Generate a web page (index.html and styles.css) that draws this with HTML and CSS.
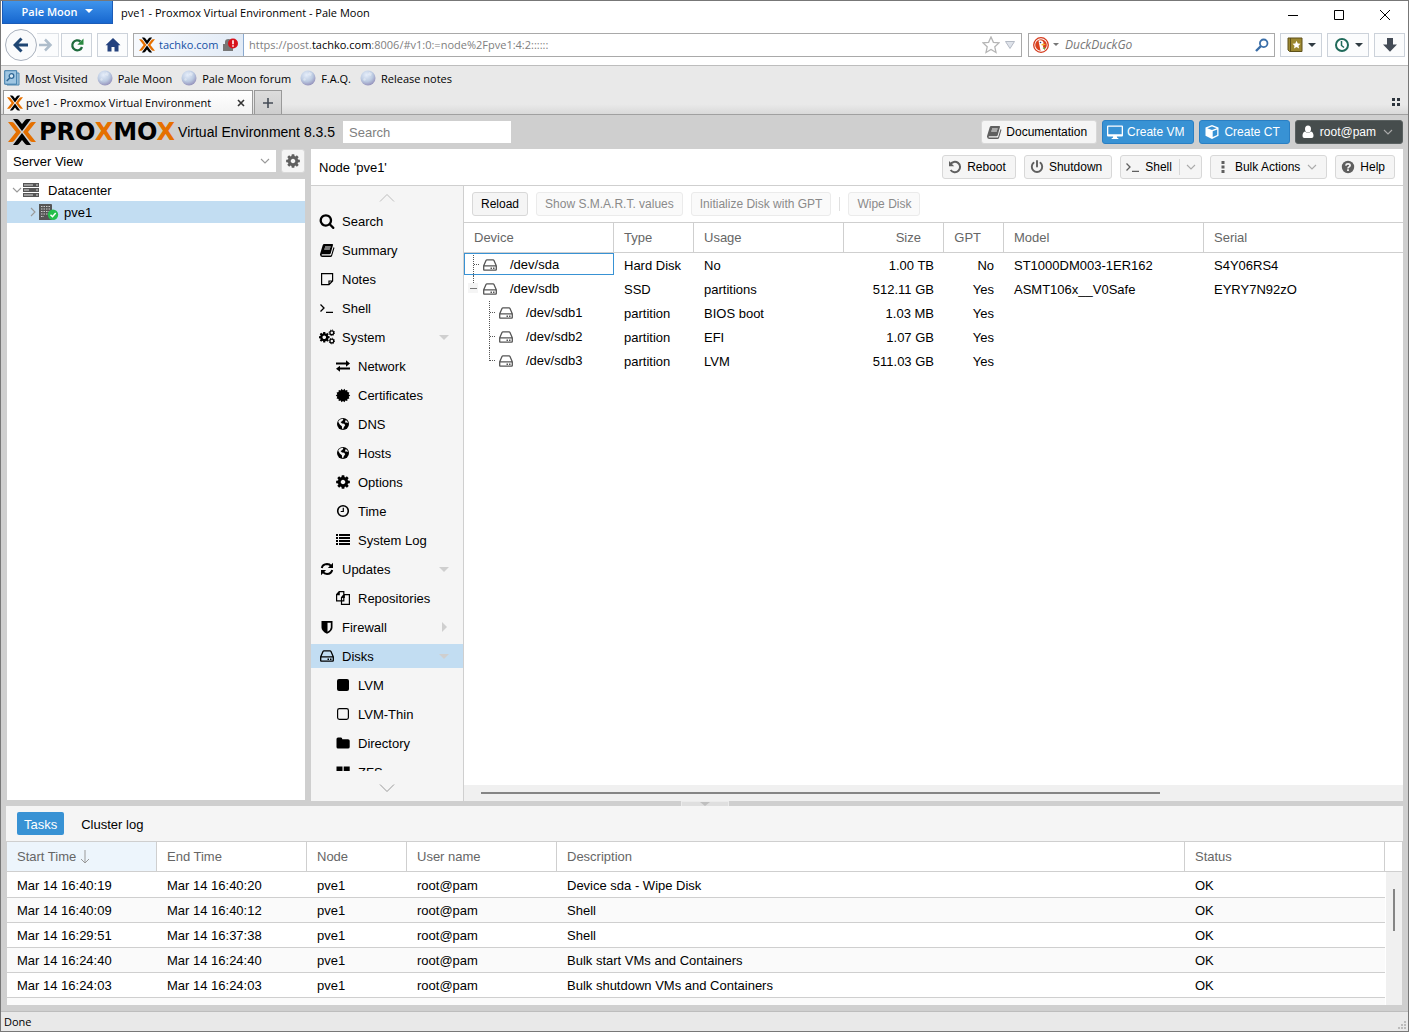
FILE: index.html
```html
<!DOCTYPE html>
<html lang="en">
<head>
    <meta charset="UTF-8">
    <meta name="viewport" content="width=device-width, initial-scale=1.0">
    <title>pve1 - Proxmox Virtual Environment</title>
    <link rel="stylesheet" href="styles.css">
</head>
<body>

    <!-- Icon set -->
    <svg class="sprite" aria-hidden="true">
        <defs>
            <radialGradient id="moon" cx="40%" cy="30%" r="70%">
                <stop offset="0" stop-color="#e6eefa"/>
                <stop offset="0.6" stop-color="#bccbe2"/>
                <stop offset="1" stop-color="#9795bd"/>
            </radialGradient>
        </defs>
        <symbol id="i-px" viewBox="0 0 28 26">
            <path fill="#e57000" d="M0 3h3.500q1.700 0 2.700 1.200L13 13l-6.800 8.800Q5.200 23 3.500 23H0l8-10zM28 3h-3.500q-1.700 0-2.700 1.200L15 13l6.800 8.800q1 1.200 2.700 1.200H28l-8-10z"/>
            <path fill="#000" d="M5 0h3.500q1.500 0 2.500 1.200L14 5l3-3.800Q18 0 19.500 0H23l-9 12zM5 26h3.500q1.500 0 2.500-1.200l3-3.800 3 3.800q1 1.200 2.500 1.200H23l-9-12z"/>
        </symbol>
        <symbol id="i-moon" viewBox="0 0 16 16">
            <circle cx="8" cy="8" r="7.500" fill="url(#moon)"/>
            <path d="M9 2l3 1-1 3-3-1zM4 8l2 1-1 2-2-1z" fill="#fff" opacity=".35"/>
        </symbol>
        <symbol id="i-search" viewBox="0 0 1792 1792"><path d="M1216 832q0-185-131.500-316.500t-316.500-131.500-316.500 131.500-131.500 316.500 131.500 316.500 316.500 131.500 316.500-131.500 131.500-316.500zm512 832q0 52-38 90t-90 38q-54 0-90-38l-343-342q-179 124-399 124-143 0-273.500-55.500t-225-150-150-225-55.500-273.500 55.500-273.500 150-225 225-150 273.500-55.500 273.500 55.500 225 150 150 225 55.500 273.500q0 220-124 399l343 343q37 37 37 90z"/></symbol>
        <symbol id="i-cog" viewBox="0 0 1792 1792"><path d="M1152 896q0-106-75-181t-181-75-181 75-75 181 75 181 181 75 181-75 75-181zm512-109v222q0 12-8 23t-20 13l-185 28q-19 54-39 91 35 50 107 138 10 12 10 25t-9 23q-27 37-99 108t-94 71q-12 0-26-9l-138-108q-44 23-91 38-16 136-29 186-7 28-36 28h-222q-14 0-24.500-8.500t-11.500-21.500l-28-184q-49-16-90-37l-141 107q-10 9-25 9-14 0-25-11-126-114-165-168-7-10-7-23 0-12 8-23 15-21 51-66.500t54-70.500q-27-50-41-99l-183-27q-13-2-21-12.500t-8-23.500v-222q0-12 8-23t19-13l186-28q14-46 39-92-40-57-107-138-10-12-10-24 0-10 9-23 26-36 98.500-107.500t94.500-71.500q13 0 26 10l138 107q44-23 91-38 16-136 29-186 7-28 36-28h222q14 0 24.500 8.500t11.500 21.500l28 184q49 16 90 37l142-107q9-9 24-9 13 0 25 10 129 119 165 170 7 8 7 22 0 12-8 23-15 21-51 66.500t-54 70.500q26 50 41 98l183 28q13 2 21 12.500t8 23.500z"/></symbol>
        <symbol id="i-book" viewBox="0 0 16 16">
            <path fill-rule="evenodd" d="M5.200 2h8q1.100 0 .8 1.100l-2.300 8.200q-.3.900-1.200.9H3.300q-.8 0-.7.800.1.600 1 .6h7.700q.7 0 .9-.6l2.300-7.800.7.300q.3.300.1.900l-2.200 7.400q-.4 1.200-1.600 1.200H3.400Q1.300 15 1 12.800q-.1-.6.200-1.300L3.700 3.200Q4.100 2 5.200 2zM6.100 4.400l-.3 1h5.700l.3-1zM5.400 6.600l-.3 1h5.700l.3-1z"/>
        </symbol>
        <symbol id="i-note" viewBox="0 0 16 16"><path fill="none" stroke="currentColor" stroke-width="1.200" d="M2.600 2.600h11v7.400l-3.600 3.600H2.600zM13.600 10H10v3.600"/></symbol>
        <symbol id="i-term" viewBox="0 0 16 16"><path fill="none" stroke="currentColor" stroke-width="1.300" d="M1.500 4.500l3.500 3.500-3.500 3.500M7 12.300h7"/></symbol>
        <symbol id="i-cogs" viewBox="0 0 16 16">
            <use href="#i-cog" x="-1" y="2" width="12.500" height="12.500"/>
            <circle cx="12.800" cy="3.800" r="1.900" fill="none" stroke="currentColor" stroke-width="1.300"/>
            <circle cx="12.800" cy="3.800" r="2.800" fill="none" stroke="currentColor" stroke-width="1" stroke-dasharray="1.100 1.100"/>
            <circle cx="12.800" cy="12" r="1.900" fill="none" stroke="currentColor" stroke-width="1.300"/>
            <circle cx="12.800" cy="12" r="2.800" fill="none" stroke="currentColor" stroke-width="1" stroke-dasharray="1.100 1.100"/>
        </symbol>
        <symbol id="i-exchange" viewBox="0 0 16 16"><path d="M1 4.500h10V2.300l4 3.200-4 3.200V6.500H1zM15 9.500H5V7.800L1 10.800l4 3v-2.300h10z"/></symbol>
        <symbol id="i-cert" viewBox="0 0 16 16"><path d="M8 3.200l1.500-1.400.8 1.800 2-.6.100 2.100 2 .3-.7 1.900L15.200 8.500l-1.500 1.200.7 1.900-2 .3-.1 2.100-2-.6-.8 1.800L8 13.900l-1.500 1.300-.8-1.800-2 .6-.1-2.100-2-.3.700-1.900L.8 8.500l1.500-1.200-.7-1.900 2-.3.100-2.100 2 .6.800-1.800z"/></symbol>
        <symbol id="i-globe" viewBox="0 0 16 16">
            <circle cx="8" cy="8" r="6"/>
            <path fill="#f5f5f5" d="M5 3.500l2.800-.8.500 1L7 5.200 5.500 6 7 7.500l2.200.3 1 1.500-1.400 2-.8 2.200-1-1.300-.1-2L5 8.800 3.600 6.500 3.200 5.500zM10.800 4l1.500 1.200.9 1.800-1.500-.4-1.200.2-.4-1.200z"/>
        </symbol>
        <symbol id="i-clock" viewBox="0 0 16 16"><circle cx="8" cy="8" r="5.300" fill="none" stroke="currentColor" stroke-width="1.600"/><path fill="none" stroke="currentColor" stroke-width="1.200" d="M8.300 4.800v3.700H5.700"/></symbol>
        <symbol id="i-list" viewBox="0 0 16 16"><path d="M1 2h2v2H1zM4 2h11v2H4zM1 5h2v2H1zM4 5h11v2H4zM1 8h2v2H1zM4 8h11v2H4zM1 11h2v2H1zM4 11h11v2H4z"/></symbol>
        <symbol id="i-refresh" viewBox="0 0 16 16"><path fill="none" stroke="currentColor" stroke-width="2" d="M2.800 7Q3.600 3.200 8 3q2.600 0 4.300 2.100M13.200 9q-.8 3.800-5.200 4-2.600 0-4.300-2.100"/><path d="M14 1.800V7H8.900zM2 14.200V9h5.100z"/></symbol>
        <symbol id="i-copy" viewBox="0 0 16 16"><path fill="#f5f5f5" stroke="currentColor" stroke-width="1.200" d="M4.200 1.700h4.600v9.100H1.600V4.600zM4.200 1.700v2.900H1.600M9 4.700h5.400v9.600H6.500V7.500zM9.300 4.700v2.800H6.500"/></symbol>
        <symbol id="i-shield" viewBox="0 0 16 16"><path fill-rule="evenodd" d="M2.500 2h11v6.500q0 3.600-5.500 6.300-5.500-2.700-5.500-6.300zM8.500 3.700v9q3.300-1.900 3.300-4.200V3.700z"/></symbol>
        <symbol id="i-hdd" viewBox="0 0 16 16"><path fill="none" stroke="currentColor" stroke-width="1.300" d="M1.700 8.800L4 3.500q.3-.6 1-.6h6q.7 0 1 .6l2.300 5.300v3.700q0 .7-.7.700H2.400q-.7 0-.7-.7zM1.700 8.800h12.600"/><path d="M8.500 10.500H10V12H8.500zM11 10.500h1.500V12H11z"/></symbol>
        <symbol id="i-square" viewBox="0 0 16 16"><rect x="2" y="2" width="12" height="12" rx="2"/></symbol>
        <symbol id="i-square-o" viewBox="0 0 16 16"><rect x="2.600" y="2.600" width="10.800" height="10.800" rx="1.800" fill="none" stroke="currentColor" stroke-width="1.200"/></symbol>
        <symbol id="i-folder" viewBox="0 0 16 16"><path d="M1.500 4q0-1.500 1.500-1.500h3q1.200 0 1.300 1.700H13q1.700 0 1.700 1.500V12q0 1.500-1.700 1.500H3q-1.500 0-1.500-1.500z"/></symbol>
        <symbol id="i-large" viewBox="0 0 16 16"><path d="M1.500 2.500h6v5h-6zM8.700 2.500h6v5h-6zM1.500 8.700h6v5h-6zM8.700 8.700h6v5h-6z"/></symbol>
        <symbol id="i-undo" viewBox="0 0 16 16"><path fill="none" stroke="currentColor" stroke-width="2" d="M3.300 5.500A5.200 5.200 0 1 1 3.600 11"/><path d="M2 2v5.300h5.200z"/></symbol>
        <symbol id="i-power" viewBox="0 0 16 16"><path fill="none" stroke="currentColor" stroke-width="1.900" stroke-linecap="round" d="M4.600 3.800a5.200 5.200 0 1 0 6.800 0M8 2v5.500"/></symbol>
        <symbol id="i-dots" viewBox="0 0 16 16"><path d="M6.500 2h3v3h-3zM6.500 6.500h3v3h-3zM6.500 11h3v3h-3z"/></symbol>
        <symbol id="i-help" viewBox="0 0 16 16"><circle cx="8" cy="8" r="6.200"/><path fill="none" stroke="#f5f5f5" stroke-width="1.700" d="M5.800 6.600Q6 4.900 8 4.900q2 0 2.100 1.500Q10 7.400 8.900 7.900 8 8.300 8 9.400"/><path fill="#f5f5f5" d="M7.100 10.300h1.800v1.700H7.100z"/></symbol>
        <symbol id="i-desktop" viewBox="0 0 16 16"><path fill-rule="evenodd" d="M0 2.500Q0 1.500 1 1.500h14q1 0 1 1v9q0 1-1 1H9.800l.5 1.500h1v1H4.700v-1h1l.5-1.500H1q-1 0-1-1zM1.300 2.800v7.500h13.400V2.800z"/></symbol>
        <symbol id="i-cube" viewBox="0 0 16 16"><path fill-rule="evenodd" d="M8 1l6.500 2.400v8.400L8 15l-6.500-3.200V3.400zM8 2.500L3.300 4.200 8 6l4.700-1.800zM8.700 7.200v5.900l4.500-2.200V5.500z"/></symbol>
        <symbol id="i-user" viewBox="0 0 16 16"><ellipse cx="8" cy="5" rx="3" ry="3.500"/><path d="M5 7.500q3 2.600 6 0 2.500.8 2.500 4.500 0 2-1.800 2H4.300q-1.800 0-1.800-2 0-3.700 2.500-4.500z"/></symbol>
        <symbol id="i-chev" viewBox="0 0 10 10"><path fill="none" stroke="currentColor" stroke-width="1.100" d="M1 3l4 4 4-4"/></symbol>
        <symbol id="i-chev-r" viewBox="0 0 10 10"><path fill="none" stroke="currentColor" stroke-width="1.100" d="M3 1l4 4-4 4"/></symbol>
        <symbol id="i-server" viewBox="0 0 16 14"><path d="M0 0h16v4H0zM0 5h16v4H0zM0 10h16v4H0z"/><path fill="#ddd" d="M1 1.500h9v1H1zM1 6.500h5v1H1zM1 11.500h9v1H1zM13 1.500h2v1h-2zM13 6.500h2v1h-2zM13 11.500h2v1h-2z"/></symbol>
        <symbol id="i-node" viewBox="0 0 20 16">
            <path fill="#555" d="M0 0h12q1 0 1 1v15H0z"/>
            <path fill="none" stroke="#ccc" stroke-width="1.200" stroke-dasharray="1.500 1" d="M2 2.500h9M2 5h9M2 7.500h9M2 10h9M2 12.500h3"/>
            <circle cx="14" cy="10.700" r="5.200" fill="#21bf4b"/>
            <path fill="none" stroke="#fff" stroke-width="1.500" d="M11.500 10.700l2 2 3.200-3.700"/>
        </symbol>
        <symbol id="i-elbow" viewBox="0 0 16 24"><path class="dots" d="M8.500 1v23M9 12.500h5"/></symbol>
        <symbol id="i-elbow-end" viewBox="0 0 16 24"><path class="dots" d="M8.500 0v13M9 12.500h5"/></symbol>
        <symbol id="i-minus" viewBox="0 0 16 24"><path class="dots" d="M8.500 0v7"/><path fill="#f5f5f5" d="M3 7h10v10H3z"/><path fill="#777" d="M5 12h7v1H5z"/></symbol>
    </svg>

    <div class="window">
        <header class="chrome">
            <div class="titlebar">
                <button class="app-menu">Pale Moon <span class="caret"></span></button>
                <span class="window-title">pve1 - Proxmox Virtual Environment - Pale Moon</span>
                <button class="win-btn" aria-label="Minimize"><svg viewBox="0 0 12 12"><path d="M1 6.500h10"/></svg></button>
                <button class="win-btn" aria-label="Maximize"><svg viewBox="0 0 12 12"><path d="M1.500 1.500h9v9h-9z"/></svg></button>
                <button class="win-btn" aria-label="Close"><svg viewBox="0 0 12 12"><path d="M1 1l10 10M11 1L1 11"/></svg></button>
            </div>

            <div class="navbar">
                <div class="history">
                    <button class="back" aria-label="Back"><svg viewBox="0 0 16 16"><path d="M8.500 1.500L2 8l6.500 6.500M2.500 8H15" fill="none" stroke="#1f4673" stroke-width="3"/></svg></button>
                    <button class="forward" aria-label="Forward"><svg viewBox="0 0 16 16"><path d="M8 2.500L13.500 8 8 13.500M13 8H2" fill="none" stroke="#aebdcb" stroke-width="2.500"/></svg></button>
                </div>
                <button class="tool" aria-label="Reload"><svg viewBox="0 0 16 16"><path d="M11.500 4.500A5 5 0 1 0 13 10" fill="none" stroke="#1f6b3d" stroke-width="2.300"/><path d="M14.500 1.500v6.200H8.300z" fill="#2b8a40"/></svg></button>
                <button class="tool" aria-label="Home"><svg viewBox="0 0 16 16"><path d="M8 1l7.500 7.300h-2V14.500H9.500V10h-3v4.500h-4V8.300h-2z" fill="#24427f"/></svg></button>
                <div class="urlbar">
                    <button class="identity">
                        <svg class="fav"><use href="#i-px"/></svg>
                        tachko.com
                        <svg class="fav" viewBox="0 0 16 16"><path d="M1 7h2V5q0-3 3.500-3T10 5v2h1v7H1z" fill="#777"/><circle cx="11" cy="6.500" r="5" fill="#d8121c"/><path d="M10.200 3.300h1.600v4h-1.600zM10.200 8.200h1.600v1.500h-1.600z" fill="#fff"/></svg>
                    </button>
                    <div class="url" role="textbox" aria-label="Address">https://post.<b>tachko.com</b>:8006/#v1:0:=node%2Fpve1:4:2::::::</div>
                    <button class="bare" aria-label="Bookmark this page"><svg class="star" viewBox="0 0 18 18"><path d="M9 1l2.400 5.300 5.600.6-4.200 3.900 1.200 5.700-5-3-5 3 1.200-5.700L1 6.900l5.600-.6z" fill="#fff" stroke="#b5b5b5" stroke-width="1.300"/></svg></button>
                    <button class="bare" aria-label="Show history"><svg class="drop" viewBox="0 0 10 8"><path d="M.5.5h9L5 7.500z" fill="#dfe3ea" stroke="#b4bac4"/></svg></button>
                </div>
                <div class="searchbar">
                    <svg class="fav" viewBox="0 0 16 16"><circle cx="8" cy="8" r="7.300" fill="#fff" stroke="#d53a1c" stroke-width="1.300"/><circle cx="8" cy="8" r="5.800" fill="#d9411e"/><path d="M5.500 3.500q4-1 5 2l-.5 4 1.500 4Q9 14.500 7.500 13.500z" fill="#fff"/><path d="M8.500 7q3-.6 4.500.3-2 1.500-4.500 1z" fill="#f5b62a"/><path d="M9.500 11l2.500-.8v2.600z" fill="#5cae3c"/><circle cx="7.500" cy="5.500" r=".8" fill="#24427f"/></svg>
                    <span class="caret dark"></span>
                    <input type="text" placeholder="DuckDuckGo" aria-label="Web search">
                    <button class="bare" aria-label="Go"><svg class="glass" viewBox="0 0 14 14"><circle cx="8.700" cy="5.300" r="3.800" fill="none" stroke="#3a6ea8" stroke-width="1.800"/><path d="M6 8l-5 5" stroke="#3a6ea8" stroke-width="2.400"/></svg></button>
                </div>
                <button class="tool wide" aria-label="Bookmarks"><svg viewBox="0 0 16 16"><path d="M1 1h14v13.500H2.500L1 13z" fill="#9b8730" stroke="#5e511b"/><path d="M3.500 1v13" stroke="#5e511b"/><path d="M9.500 3.800l1.300 2.600 2.800.3-2.100 2 .6 2.800-2.600-1.400-2.500 1.400.5-2.800-2-2 2.800-.3z" fill="#fff"/></svg><span class="caret dark"></span></button>
                <button class="tool wide" aria-label="History"><svg viewBox="0 0 16 16"><circle cx="8" cy="8" r="6" fill="#fff" stroke="#1f6a5a" stroke-width="2"/><path d="M7.500 4v4.500l2.500 2" fill="none" stroke="#1f6a5a" stroke-width="1.500"/></svg><span class="caret dark"></span></button>
                <button class="tool" aria-label="Downloads"><svg viewBox="0 0 16 16"><path d="M5 1h6v6.500h4L8 14.800 1 7.500h4z" fill="#434b56"/></svg></button>
            </div>

            <nav class="bookmarks">
                <a href="#"><svg class="fav" viewBox="0 0 16 16"><path d="M3 3h12v12H3z" fill="#a9cbe2" stroke="#4f87b0"/><path d="M.7.700h12v13.500H.7z" fill="#9fc6e2" stroke="#3c7aa8"/><circle cx="7.500" cy="6" r="2.300" fill="#d7e9f5" stroke="#2f6795" stroke-width="1.300"/><path d="M5.700 8l-3 3" stroke="#2f6795" stroke-width="1.500"/></svg>Most Visited</a>
                <a href="#"><svg class="fav"><use href="#i-moon"/></svg>Pale Moon</a>
                <a href="#"><svg class="fav"><use href="#i-moon"/></svg>Pale Moon forum</a>
                <a href="#"><svg class="fav"><use href="#i-moon"/></svg>F.A.Q.</a>
                <a href="#"><svg class="fav"><use href="#i-moon"/></svg>Release notes</a>
            </nav>

            <div class="tabs">
                <div class="tab">
                    <svg class="fav"><use href="#i-px"/></svg>
                    <span>pve1 - Proxmox Virtual Environment</span>
                    <button class="bare" aria-label="Close tab"><svg class="tab-x" viewBox="0 0 8 8"><path d="M1 1l6 6M7 1L1 7" stroke="#333" stroke-width="1.600"/></svg></button>
                </div>
                <button class="new-tab" aria-label="New tab"><svg viewBox="0 0 10 10"><path d="M5 0v10M0 5h10" stroke="#444b55" stroke-width="1.600"/></svg></button>
                <button class="bare groups" aria-label="Tab groups"><svg class="tab-x" viewBox="0 0 8 8"><path d="M0 0h3v3H0zM5 0h3v3H5zM0 5h3v3H0zM5 5h3v3H5z" fill="#2d353d"/></svg></button>
            </div>
        </header>

        <main class="pve">
            <div class="pve-top">
                <svg class="emblem"><use href="#i-px"/></svg>
                <span class="wordmark">PRO<i>X</i>MO<i>X</i></span>
                <span class="version">Virtual Environment 8.3.5</span>
                <input class="pve-search" type="text" placeholder="Search" aria-label="Search">
                <div class="top-buttons">
                    <button class="btn"><svg class="ico"><use href="#i-book"/></svg>Documentation</button>
                    <button class="btn blue"><svg class="ico"><use href="#i-desktop"/></svg>Create VM</button>
                    <button class="btn blue"><svg class="ico"><use href="#i-cube"/></svg>Create CT</button>
                    <button class="btn dark"><svg class="ico"><use href="#i-user"/></svg>root@pam<svg class="chev"><use href="#i-chev"/></svg></button>
                </div>
            </div>

            <div class="workspace">
                <aside class="resources">
                    <div class="view-row">
                        <div class="view-select">
                            <select aria-label="View"><option>Server View</option></select>
                            <svg class="chev"><use href="#i-chev"/></svg>
                        </div>
                        <button class="btn gear" aria-label="Tree settings"><svg class="ico"><use href="#i-cog"/></svg></button>
                    </div>
                    <div class="tree">
                        <a href="#"><svg class="chev"><use href="#i-chev"/></svg><svg class="node-ico"><use href="#i-server" width="16" height="14" y="1"/></svg>Datacenter</a>
                        <a href="#" class="child selected"><svg class="chev"><use href="#i-chev-r"/></svg><svg class="node-ico"><use href="#i-node"/></svg>pve1</a>
                    </div>
                </aside>

                <section class="content">
                    <div class="content-head">
                        <h1>Node 'pve1'</h1>
                        <button class="btn"><svg class="ico"><use href="#i-undo"/></svg>Reboot</button>
                        <button class="btn"><svg class="ico"><use href="#i-power"/></svg>Shutdown</button>
                        <button class="btn split"><svg class="ico"><use href="#i-term"/></svg>Shell<svg class="chev"><use href="#i-chev"/></svg></button>
                        <button class="btn"><svg class="ico"><use href="#i-dots"/></svg>Bulk Actions<svg class="chev"><use href="#i-chev"/></svg></button>
                        <button class="btn"><svg class="ico"><use href="#i-help"/></svg>Help</button>
                    </div>

                    <div class="content-body">
                        <nav class="menu">
                            <button class="scroller faded" aria-label="Scroll up"><svg viewBox="0 0 16 9"><path d="M1 8.500l7-7 7 7"/></svg></button>
                            <div class="menu-items">
                                <a href="#"><svg class="ico"><use href="#i-search"/></svg>Search</a>
                                <a href="#"><svg class="ico"><use href="#i-book"/></svg>Summary</a>
                                <a href="#"><svg class="ico"><use href="#i-note"/></svg>Notes</a>
                                <a href="#"><svg class="ico"><use href="#i-term"/></svg>Shell</a>
                                <a href="#" class="open"><svg class="ico"><use href="#i-cogs"/></svg>System</a>
                                <a href="#" class="sub"><svg class="ico"><use href="#i-exchange"/></svg>Network</a>
                                <a href="#" class="sub"><svg class="ico"><use href="#i-cert"/></svg>Certificates</a>
                                <a href="#" class="sub"><svg class="ico"><use href="#i-globe"/></svg>DNS</a>
                                <a href="#" class="sub"><svg class="ico"><use href="#i-globe"/></svg>Hosts</a>
                                <a href="#" class="sub"><svg class="ico"><use href="#i-cog"/></svg>Options</a>
                                <a href="#" class="sub"><svg class="ico"><use href="#i-clock"/></svg>Time</a>
                                <a href="#" class="sub"><svg class="ico"><use href="#i-list"/></svg>System Log</a>
                                <a href="#" class="open"><svg class="ico"><use href="#i-refresh"/></svg>Updates</a>
                                <a href="#" class="sub"><svg class="ico"><use href="#i-copy"/></svg>Repositories</a>
                                <a href="#" class="closed"><svg class="ico"><use href="#i-shield"/></svg>Firewall</a>
                                <a href="#" class="open selected"><svg class="ico"><use href="#i-hdd"/></svg>Disks</a>
                                <a href="#" class="sub"><svg class="ico"><use href="#i-square"/></svg>LVM</a>
                                <a href="#" class="sub"><svg class="ico"><use href="#i-square-o"/></svg>LVM-Thin</a>
                                <a href="#" class="sub"><svg class="ico"><use href="#i-folder"/></svg>Directory</a>
                                <a href="#" class="sub"><svg class="ico"><use href="#i-large"/></svg>ZFS</a>
                            </div>
                            <button class="scroller" aria-label="Scroll down"><svg viewBox="0 0 16 9"><path d="M1 .5l7 7 7-7"/></svg></button>
                        </nav>

                        <div class="disks">
                            <div class="disk-bar">
                                <button class="btn text">Reload</button>
                                <button class="btn text" disabled>Show S.M.A.R.T. values</button>
                                <button class="btn text" disabled>Initialize Disk with GPT</button>
                                <span class="bar-sep"></span>
                                <button class="btn text" disabled>Wipe Disk</button>
                            </div>
                            <table class="grid disk-grid">
                                <colgroup><col class="w150"><col class="w80"><col class="w150"><col class="w100"><col class="w60"><col class="w200"><col></colgroup>
                                <thead>
                                    <tr><th>Device</th><th>Type</th><th>Usage</th><th class="num">Size</th><th class="num">GPT</th><th>Model</th><th>Serial</th></tr>
                                </thead>
                                <tbody>
                                    <tr><td class="device focused"><div><svg class="elbow"><use href="#i-elbow"/></svg><svg class="ico"><use href="#i-hdd"/></svg>/dev/sda</div></td><td>Hard Disk</td><td>No</td><td class="num">1.00 TB</td><td class="num">No</td><td>ST1000DM003-1ER162</td><td>S4Y06RS4</td></tr>
                                    <tr><td class="device"><div><svg class="elbow"><use href="#i-minus"/></svg><svg class="ico"><use href="#i-hdd"/></svg>/dev/sdb</div></td><td>SSD</td><td>partitions</td><td class="num">512.11 GB</td><td class="num">Yes</td><td>ASMT106x__V0Safe</td><td>EYRY7N92zO</td></tr>
                                    <tr><td class="device part"><div><svg class="elbow"><use href="#i-elbow"/></svg><svg class="ico"><use href="#i-hdd"/></svg>/dev/sdb1</div></td><td>partition</td><td>BIOS boot</td><td class="num">1.03 MB</td><td class="num">Yes</td><td></td><td></td></tr>
                                    <tr><td class="device part"><div><svg class="elbow"><use href="#i-elbow"/></svg><svg class="ico"><use href="#i-hdd"/></svg>/dev/sdb2</div></td><td>partition</td><td>EFI</td><td class="num">1.07 GB</td><td class="num">Yes</td><td></td><td></td></tr>
                                    <tr><td class="device part"><div><svg class="elbow"><use href="#i-elbow-end"/></svg><svg class="ico"><use href="#i-hdd"/></svg>/dev/sdb3</div></td><td>partition</td><td>LVM</td><td class="num">511.03 GB</td><td class="num">Yes</td><td></td><td></td></tr>
                                </tbody>
                            </table>
                            <div class="hscroll"><span></span></div>
                        </div>
                    </div>
                </section>
            </div>

            <div class="splitter"><button aria-label="Collapse log panel"></button></div>

            <section class="log">
                <div class="log-tabs">
                    <button class="log-tab active">Tasks</button>
                    <button class="log-tab">Cluster log</button>
                </div>
                <div class="log-body">
                    <table class="grid log-grid">
                        <colgroup><col class="w150"><col class="w150"><col class="w100"><col class="w150"><col><col class="w200"><col class="w17"></colgroup>
                        <thead>
                            <tr><th class="sorted">Start Time <svg class="sort" viewBox="0 0 10 14"><path d="M5 0v13M1 9l4 4 4-4"/></svg></th><th>End Time</th><th>Node</th><th>User name</th><th>Description</th><th>Status</th><th></th></tr>
                        </thead>
                        <tbody>
                            <tr><td>Mar 14 16:40:19</td><td>Mar 14 16:40:20</td><td>pve1</td><td>root@pam</td><td>Device sda - Wipe Disk</td><td>OK</td><td></td></tr>
                            <tr><td>Mar 14 16:40:09</td><td>Mar 14 16:40:12</td><td>pve1</td><td>root@pam</td><td>Shell</td><td>OK</td><td></td></tr>
                            <tr><td>Mar 14 16:29:51</td><td>Mar 14 16:37:38</td><td>pve1</td><td>root@pam</td><td>Shell</td><td>OK</td><td></td></tr>
                            <tr><td>Mar 14 16:24:40</td><td>Mar 14 16:24:40</td><td>pve1</td><td>root@pam</td><td>Bulk start VMs and Containers</td><td>OK</td><td></td></tr>
                            <tr><td>Mar 14 16:24:03</td><td>Mar 14 16:24:03</td><td>pve1</td><td>root@pam</td><td>Bulk shutdown VMs and Containers</td><td>OK</td><td></td></tr>
                            <tr><td></td><td></td><td></td><td></td><td></td><td></td><td></td></tr>
                        </tbody>
                    </table>
                    <div class="vscroll"><span></span></div>
                </div>
            </section>
        </main>

        <footer class="statusbar">
            <span>Done</span>
            <svg class="grip" viewBox="0 0 8 8"><path d="M6 0h2v2H6zM3 3h2v2H3zM6 3h2v2H6zM0 6h2v2H0zM3 6h2v2H3zM6 6h2v2H6z"/></svg>
        </footer>
    </div>

</body>
</html>
```

FILE: styles.css
```css
* {
    box-sizing: border-box;
}
body {
    margin: 0;
    font-family: "Liberation Sans", Arial, sans-serif;
    font-size: 13px;
    color: #000;
}
button, input, select {
    font: inherit;
    color: inherit;
    margin: 0;
}
button {
    display: flex;
    align-items: center;
    cursor: pointer;
}
a {
    color: inherit;
    text-decoration: none;
}
svg {
    display: block;
    flex: none;
    fill: currentColor;
}
.sprite {
    position: absolute;
    width: 0;
    height: 0;
}
.window {
    display: flex;
    flex-direction: column;
    height: 100vh;
    border: 1px solid #777;
}

/* Browser chrome */
.chrome, .statusbar {
    font-family: "Open Sans", "Segoe UI", sans-serif;
    font-size: 11px;
}
.titlebar {
    display: flex;
    align-items: flex-start;
    height: 27px;
    padding-left: 1px;
}
.app-menu {
    justify-content: center;
    gap: 8px;
    width: 111px;
    height: 23px;
    padding: 0 0 2px;
    border: 1px solid #1b5cb8;
    border-top: none;
    background: linear-gradient(#3f94ec, #1767cf);
    color: #fff;
    font-weight: 600;
}
.caret {
    border: 4px solid transparent;
    border-top-color: currentColor;
    border-bottom: none;
}
.caret.dark {
    color: #2f3b42;
}
.window-title {
    flex: 1;
    padding-left: 8px;
    font-size: 11px;
    line-height: 24px;
}
.win-btn {
    justify-content: center;
    width: 46px;
    height: 27px;
    padding: 0;
    border: none;
    background: none;
}
.win-btn svg {
    width: 12px;
    height: 12px;
    fill: none;
    stroke: #000;
    stroke-width: 1;
}
.navbar {
    display: flex;
    align-items: center;
    height: 37px;
    padding: 0 3px 4px 4px;
    gap: 5px;
}
.history {
    display: flex;
    align-items: center;
    margin-right: -3px;
}
.back {
    justify-content: center;
    width: 32px;
    height: 32px;
    padding: 0;
    border: 1px solid #a9b1bd;
    border-radius: 50%;
    background: #fafbfc;
}
.forward {
    width: 22px;
    height: 24px;
    padding: 0;
    border: 1px solid #dde1e6;
    border-left: none;
    background: #fbfcfd;
}
.back svg, .forward svg, .tool svg {
    width: 16px;
    height: 16px;
}
.tool {
    justify-content: center;
    gap: 5px;
    width: 31px;
    height: 24px;
    padding: 0;
    border: 1px solid #ccd2da;
    background: #fbfcfd;
}
.tool.wide {
    width: 42px;
}
.urlbar, .searchbar {
    display: flex;
    align-items: center;
    height: 24px;
    border: 1px solid #a9a9a9;
    background: #fff;
}
.urlbar {
    flex: 1;
    margin-right: 1px;
    padding-right: 6px;
}
.identity {
    gap: 4px;
    align-self: stretch;
    width: 110px;
    padding: 0 3px 0 5px;
    border: none;
    border-right: 1px solid #8aa9cf;
    background: linear-gradient(90deg, #f6f9fd, #e2ebf6);
    color: #1450a5;
}
.fav {
    width: 16px;
    height: 16px;
}
.url {
    flex: 1;
    padding-left: 5px;
    color: #808080;
}
.url b {
    font-weight: normal;
    color: #000;
}
.bare {
    padding: 0;
    border: none;
    background: none;
}
.star {
    width: 18px;
    height: 18px;
    margin-right: 5px;
}
.drop {
    width: 10px;
    height: 8px;
}
.searchbar {
    width: 247px;
    padding: 0 5px 0 4px;
    gap: 4px;
}
.searchbar .caret {
    border-width: 3px 3px 0;
    color: #777;
}
.searchbar input {
    flex: 1;
    min-width: 0;
    padding: 0 2px;
    border: none;
    outline: none;
    font-size: 12px;
}
.searchbar input::placeholder {
    font-style: italic;
    color: #777;
}
.glass {
    width: 14px;
    height: 14px;
}
.bookmarks {
    display: flex;
    align-items: center;
    gap: 9px;
    height: 25px;
    padding-left: 3px;
    border-top: 1px solid #bdbdbd;
    background: #e9e9e9;
}
.bookmarks a {
    display: flex;
    align-items: center;
    gap: 5px;
}
.tabs {
    display: flex;
    height: 25px;
    padding-left: 2px;
    gap: 1px;
    border-bottom: 1px solid #a0a0a0;
    background: linear-gradient(#e9e9e9 60%, #d9d9d9);
}
.tab {
    display: flex;
    align-items: center;
    gap: 3px;
    width: 250px;
    padding: 0 7px 0 3px;
    border: 1px solid #999;
    border-bottom: none;
    background: linear-gradient(#fff, #f3f3f3);
}
.tab span {
    flex: 1;
    white-space: nowrap;
}
.tab-x {
    width: 8px;
    height: 8px;
}
.new-tab {
    justify-content: center;
    width: 28px;
    padding: 0;
    border: 1px solid #999;
    border-bottom: none;
    background: linear-gradient(#dcdcdc, #cecece);
}
.new-tab svg {
    width: 10px;
    height: 10px;
}
.groups {
    margin-left: auto;
    margin-right: 8px;
}
.statusbar {
    display: flex;
    align-items: center;
    justify-content: space-between;
    height: 20px;
    padding: 0 2px 0 3px;
    border-top: 1px solid #bdbdbd;
    background: #e9e9e9;
}
.grip {
    width: 8px;
    height: 8px;
    align-self: flex-end;
    margin-bottom: 2px;
    fill: #bcbcbc;
}

/* Proxmox page */
.pve {
    display: flex;
    flex-direction: column;
    flex: 1;
    min-height: 0;
    padding: 0 5px 6px;
    background: #cfcfcf;
}
.pve-top {
    display: flex;
    align-items: center;
    height: 34px;
    padding-left: 2px;
}
.emblem {
    width: 28px;
    height: 26px;
}
.wordmark {
    margin-left: 3px;
    font-family: "DejaVu Sans", Verdana, sans-serif;
    font-size: 24px;
    font-weight: bold;
    line-height: 26px;
}
.wordmark i {
    font-style: normal;
    color: #e57000;
}
.version {
    margin-left: 3px;
    font-size: 14px;
}
.pve-search {
    width: 168px;
    height: 22px;
    margin-left: 8px;
    padding: 0 6px;
    border: none;
    background: #fff;
}
.pve-search::placeholder {
    color: #808080;
}
.top-buttons {
    display: flex;
    gap: 5px;
    margin-left: auto;
}
.btn {
    height: 24px;
    gap: 4px;
    padding: 0 9px 0 4px;
    border: 1px solid #d8d8d8;
    border-radius: 3px;
    background: #f5f5f5;
    font-size: 12px;
    white-space: nowrap;
}
.btn .ico {
    color: #5f5f5f;
}
.btn .chev {
    margin-left: 3px;
    color: #aaa;
}
.btn.text {
    padding: 0 8px;
}
.btn:disabled {
    border-color: #ebebeb;
    background: #fafafa;
    color: #8a8a8a;
}
.btn.blue {
    border-color: #2a7fc3;
    background: #3892d4;
    color: #fff;
}
.btn.dark {
    border-color: #5a6161;
    background: #464d4d;
    color: #fff;
}
.btn.blue .ico, .btn.dark .ico {
    color: #fff;
}
.btn.split .chev {
    width: 19px;
    height: 16px;
    padding: 3px 0 3px 4px;
    border-left: 1px solid #d8d8d8;
}
.btn.split {
    padding-right: 3px;
}
.ico {
    width: 16px;
    height: 16px;
}
.chev {
    width: 10px;
    height: 10px;
    color: #999;
}
.workspace {
    display: flex;
    flex: 1;
    min-height: 0;
    gap: 6px;
}
.resources {
    display: flex;
    flex-direction: column;
    width: 299px;
    padding: 0 0 1px 1px;
}
.view-row {
    display: flex;
    align-items: center;
    gap: 5px;
    height: 24px;
    margin-bottom: 6px;
}
.view-select {
    display: flex;
    align-items: center;
    flex: 1;
    height: 22px;
    padding-right: 6px;
    background: #fff;
}
.view-select select {
    flex: 1;
    padding: 0 6px;
    border: none;
    background: none;
    appearance: none;
}
.gear {
    width: 24px;
    padding: 0;
    justify-content: center;
}
.tree {
    flex: 1;
    background: #fff;
}
.tree a {
    display: flex;
    align-items: center;
    height: 22px;
    padding-left: 5px;
}
.tree .child {
    padding-left: 21px;
}
.tree .chev {
    margin-right: 1px;
}
.node-ico {
    width: 20px;
    height: 16px;
    margin-right: 5px;
    color: #555;
}
.selected {
    background: #c2ddf2;
}
.content {
    display: flex;
    flex-direction: column;
    flex: 1;
    min-width: 0;
}
.content-head {
    display: flex;
    align-items: center;
    gap: 8px;
    height: 37px;
    padding: 0 8px;
    border-bottom: 1px solid #cfcfcf;
    background: #fff;
}
.content-head h1 {
    flex: 1;
    margin: 0;
    font-size: 13px;
    font-weight: normal;
}
.content-body {
    display: flex;
    flex: 1;
    min-height: 0;
}
.menu {
    display: flex;
    flex-direction: column;
    width: 153px;
    border-right: 1px solid #cfcfcf;
    background: #f5f5f5;
}
.menu-items {
    display: flex;
    flex-direction: column;
    flex: 1;
    gap: 5px;
    min-height: 0;
    overflow: hidden;
}
.menu-items a {
    display: flex;
    align-items: center;
    flex: none;
    gap: 7px;
    height: 24px;
    padding: 0 14px 0 8px;
}
.menu-items .sub {
    padding-left: 24px;
}
.open::after, .closed::after {
    content: "";
    margin-left: auto;
    border: 5px solid transparent;
}
.open::after {
    border-top-color: #cfcfcf;
    border-bottom: none;
}
.closed::after {
    border-left-color: #cfcfcf;
    border-right: none;
    margin-right: 2px;
}
.scroller {
    justify-content: center;
    height: 30px;
    padding: 5px 0 0;
    border: none;
    background: none;
}
.scroller.faded {
    height: 23px;
    padding: 0;
    opacity: .6;
}
.scroller svg {
    width: 16px;
    height: 9px;
    fill: none;
    stroke: #999;
}
.disks {
    display: flex;
    flex-direction: column;
    flex: 1;
    min-width: 0;
    background: #fff;
}
.disk-bar {
    display: flex;
    align-items: center;
    gap: 8px;
    height: 36px;
    padding-left: 8px;
}
.bar-sep {
    height: 14px;
    border-left: 1px solid #e0e0e0;
}

/* Grids */
.grid {
    width: 100%;
    table-layout: fixed;
    border-collapse: separate;
    border-spacing: 0;
}
.grid th {
    height: 31px;
    padding: 0 10px;
    border: solid #cfcfcf;
    border-width: 1px 1px 1px 0;
    background: #fff;
    color: #666;
    font-weight: normal;
    text-align: left;
}
.grid th:last-child {
    border-right: none;
}
.grid td {
    padding: 0 10px;
    white-space: nowrap;
}
.grid .num {
    text-align: right;
}
.grid th.num {
    padding-right: 22px;
}
.w17 { width: 17px; }
.w60 { width: 60px; }
.w80 { width: 80px; }
.w100 { width: 100px; }
.w150 { width: 150px; }
.w200 { width: 200px; }
.disk-grid td {
    height: 24px;
}
.disk-grid td.device {
    padding: 0;
    vertical-align: top;
}
.device div {
    display: flex;
    align-items: center;
    height: 24px;
    padding: 0 0 2px 1px;
}
.device.part div {
    padding-left: 17px;
}
.device.focused div {
    height: 22px;
    padding-bottom: 0;
    outline: 1px solid #3892d4;
    outline-offset: -1px;
}
.device .ico {
    margin: 2px 12px 0 1px;
    color: #555;
}
.elbow {
    width: 16px;
    height: 24px;
}
.dots {
    fill: none;
    stroke: #555;
    stroke-dasharray: 1 1;
    shape-rendering: crispEdges;
}
.hscroll {
    margin-top: auto;
    height: 16px;
    padding: 7px 17px;
    background: #f0f0f0;
}
.hscroll span {
    display: block;
    width: 75%;
    height: 2px;
    background: #858585;
}
.splitter {
    display: flex;
    justify-content: center;
    height: 5px;
}
.splitter button {
    justify-content: center;
    width: 48px;
    padding: 0;
    border: solid #ebebeb;
    border-width: 1px 1px 0;
    background: #dfdfdf;
}
.splitter button::after {
    content: "";
    border: 5px solid transparent;
    border-top: 4px solid #bfbfbf;
    border-bottom: none;
}

/* Task log */
.log {
    display: flex;
    flex-direction: column;
    height: 199px;
    background: #cfcfcf;
}
.log-tabs {
    display: flex;
    gap: 7px;
    height: 35px;
    padding: 6px 11px;
    background: #f5f5f5;
}
.log-tab {
    height: 23px;
    padding: 2px 10px 0;
    border: none;
    border-radius: 2px;
    background: none;
}
.log-tab.active {
    padding: 2px 7px 0;
    background: #3892d4;
    color: #fff;
}
.log-body {
    position: relative;
    flex: 1;
    margin: 0 1px;
    overflow: hidden;
    background: #fff;
}
.log-grid td {
    height: 25px;
    border-bottom: 1px solid #cfcfcf;
}
.log-grid tr:first-child td {
    height: 26px;
    padding-top: 1px;
}
.log-grid tr:nth-child(even) td {
    background: #fafafa;
}
.grid th.sorted {
    background: #edf5fc;
}
.sort {
    display: inline-block;
    width: 10px;
    height: 14px;
    vertical-align: middle;
    fill: none;
    stroke: #999;
}
/* track sits over the empty last column */
.vscroll {
    position: absolute;
    top: 31px;
    right: 0;
    bottom: 0;
    width: 17px;
    padding: 17px 7px 0;
    border-left: 1px solid #fff;
    background: #f0f0f0;
}
.vscroll span {
    display: block;
    height: 42px;
    background: #858585;
}
```
